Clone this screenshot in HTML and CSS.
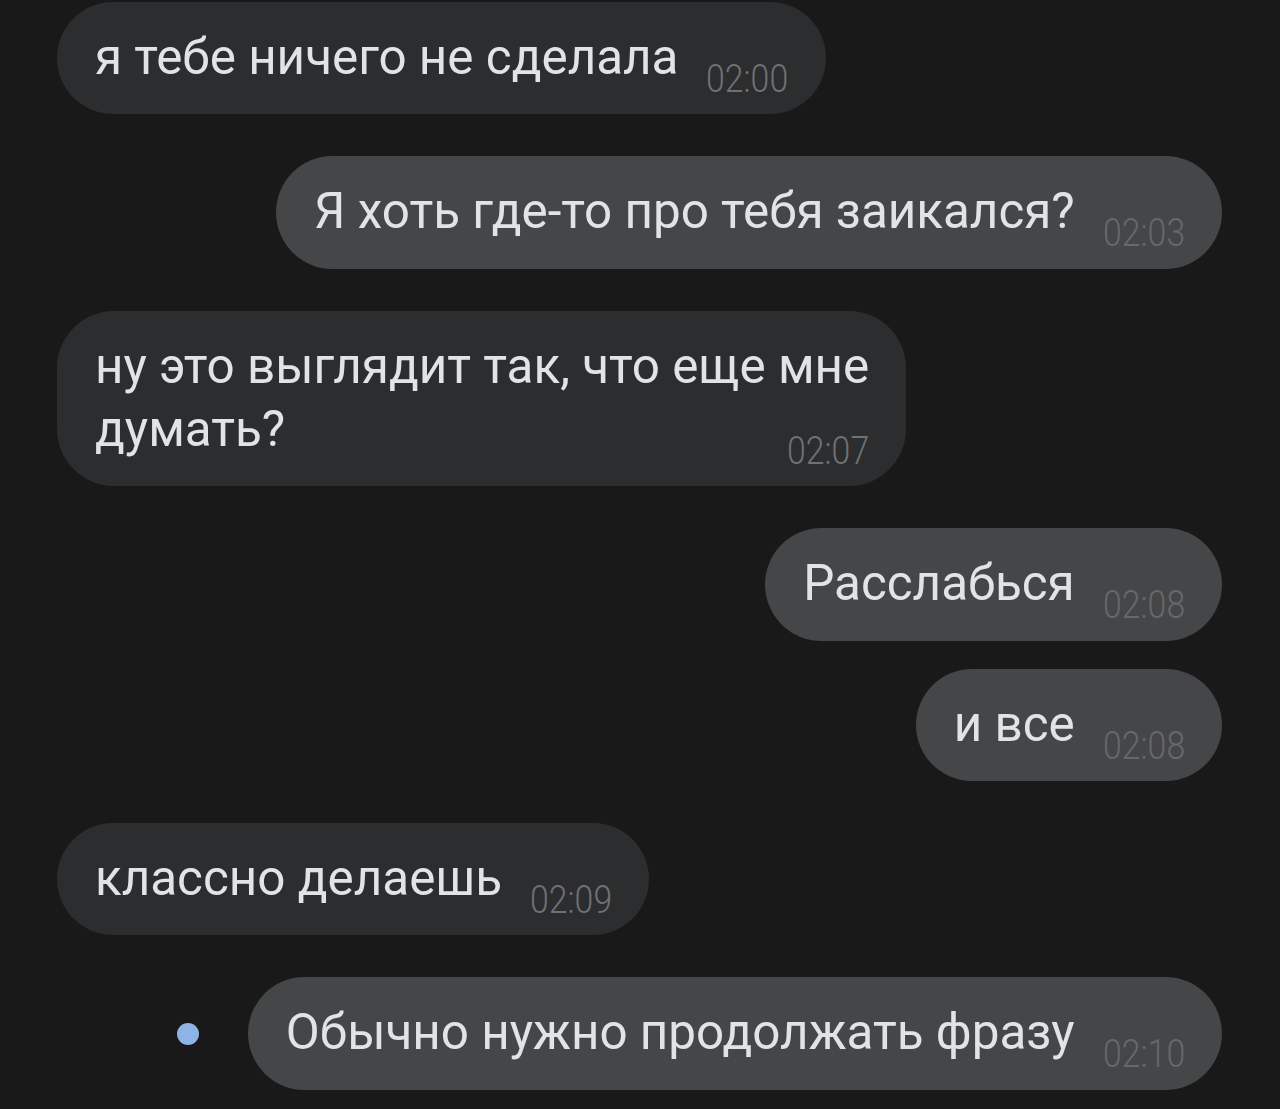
FILE: index.html
```html
<html>
<head>
  <title>Сообщения</title>
  <meta name="viewport" content="width=device-width, initial-scale=1.0">
  <link rel="stylesheet" href="styles.css">
</head>
<body>
  <div class="chat">
    <div class="row in">
      <div class="bubble">я тебе ничего не сделала<span class="time">02:00</span></div>
    </div>
    <div class="row out">
      <div class="bubble">Я хоть где-то про тебя заикался?<span class="time">02:03</span></div>
    </div>
    <div class="row in">
      <div class="bubble">ну это выглядит так, что еще мне<br>думать?<span class="time">02:07</span></div>
    </div>
    <div class="row out">
      <div class="bubble">Расслабься<span class="time">02:08</span></div>
    </div>
    <div class="row out same">
      <div class="bubble">и все<span class="time">02:08</span></div>
    </div>
    <div class="row in">
      <div class="bubble">классно делаешь<span class="time">02:09</span></div>
    </div>
    <div class="row out">
      <div class="unread"></div>
      <div class="bubble">Обычно нужно продолжать фразу<span class="time">02:10</span></div>
    </div>
  </div>
</body>
</html>
```

FILE: styles.css
```css
body {
  margin: 0;
  background: #19191a;
  font-family: Roboto, "Noto Sans", sans-serif;
  color: #e1e3e6;
}
.chat {
  display: flex;
  flex-direction: column;
  gap: 42px;
  padding: 2px 58px 20px 57px;
}
.row {
  display: flex;
  align-items: center;
}
.row.in { justify-content: flex-start; }
.row.out { justify-content: flex-end; }
.row.same { margin-top: -14px; }
.bubble {
  display: flow-root;
  font-size: 49.4px;
  line-height: 63px;
  padding: 24px 37px 25.4px 38px;
  border-radius: 57px;
  background: #2c2d2e;
  white-space: nowrap;
}
.out .bubble {
  background: #454647;
}
/* condensed clock, like the app's narrow digits */
.time {
  float: right;
  margin: 43px -10px 0 28px;
  font-size: 38px;
  line-height: 20px;
  font-weight: 300;
  color: #6f7173;
  transform: scaleX(0.89);
  transform-origin: left;
}
.out .time {
  color: #66686a;
}
.unread {
  width: 22px;
  height: 22px;
  border-radius: 50%;
  background: #8db4e4;
  margin-right: 49px;
}
```
